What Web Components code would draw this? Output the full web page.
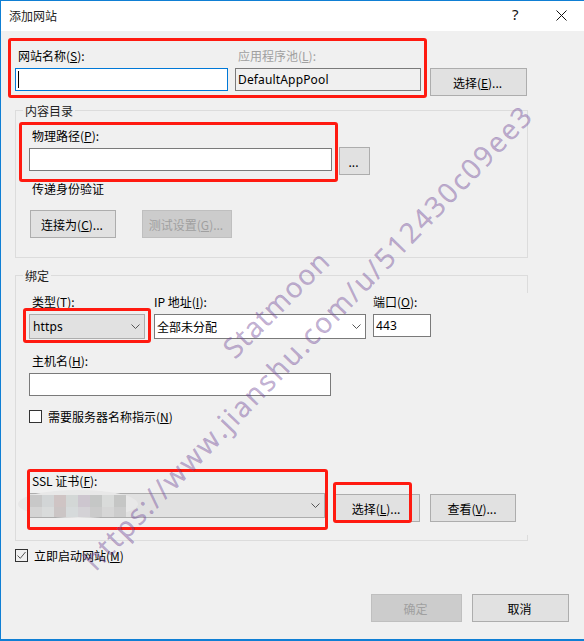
<!DOCTYPE html>
<html>
<head>
<meta charset="utf-8">
<style>
html, body { margin: 0; height: 100%; background: #f0f0f0; }
body { font: 12px "Noto Sans CJK SC", "Noto Sans", sans-serif; color: #000; overflow: hidden; }
u { text-underline-offset: 1px; }
</style>
</head>
<body>
<win-dialog heading="添加网站">
  <win-row top="15" left="14" gap="7">
    <win-field width="213"><span slot="label" style="padding-left:3px">网站名称(<u>S</u>):</span><win-input focused></win-input></win-field>
    <win-field width="186"><span slot="label" style="padding-left:3px;color:#a0a0a0">应用程序池(<u>L</u>):</span><win-input readonly value="DefaultAppPool"></win-input></win-field>
    <win-button width="97" style="margin:22px 0 0 2px">选择(<u>E</u>)...</win-button>
  </win-row>
  <win-group legend="内容目录" height="148" style="margin-top:14px">
    <win-row top="15" left="13" gap="7">
      <win-field width="303"><span slot="label" style="padding-left:3px">物理路径(<u>P</u>):</span><win-input></win-input></win-field>
      <win-button width="31" style="margin-top:21px">...</win-button>
    </win-row>
    <win-label style="margin:5px 0 0 16px">传递身份验证</win-label>
    <win-row top="13" left="14" gap="26">
      <win-button width="86">连接为(<u>C</u>)...</win-button>
      <win-button width="90" disabled>测试设置(<u>G</u>)...</win-button>
    </win-row>
  </win-group>
  <win-group legend="绑定" height="266" open-right style="margin-top:17px">
    <win-row top="16" left="13" gap="8">
      <win-field width="116"><span slot="label" style="padding-left:3px">类型(<u>T</u>):</span><win-select flat value="https"></win-select></win-field>
      <win-field width="212" style="margin-left:1px"><span slot="label">IP 地址(<u>I</u>):</span><win-select value="全部未分配"></win-select></win-field>
      <win-field width="58" style="margin-left:-1px"><span slot="label">端口(<u>O</u>):</span><win-input value="443"></win-input></win-field>
    </win-row>
    <win-row top="12" left="13">
      <win-field width="302"><span slot="label" style="padding-left:3px">主机名(<u>H</u>):</span><win-input></win-input></win-field>
    </win-row>
    <win-check style="margin:12px 0 0 13px">需要服务器名称指示(<u>N</u>)</win-check>
    <win-row top="46" left="13" gap="9">
      <win-field width="296"><span slot="label" style="padding-left:3px">SSL 证书(<u>F</u>):</span><win-select flat blurred></win-select></win-field>
      <win-button width="86" style="margin-top:23px">选择(<u>L</u>)...</win-button>
      <win-button width="86" style="margin:23px 0 0 1px">查看(<u>V</u>)...</win-button>
    </win-row>
  </win-group>
  <win-check checked style="margin:6px 0 0 14px">立即启动网站(<u>M</u>)</win-check>
  <win-row slot="footer" gap="10" style="justify-content:flex-end">
    <win-button width="91" disabled>确定</win-button>
    <win-button width="97">取消</win-button>
  </win-row>
  <red-mark slot="overlay" box="8,38,419,60"></red-mark>
  <red-mark slot="overlay" box="19,122,319,60"></red-mark>
  <red-mark slot="overlay" box="23,308,128,35"></red-mark>
  <red-mark slot="overlay" box="27,469,301,61"></red-mark>
  <red-mark slot="overlay" box="333,482,79,41"></red-mark>
  <water-mark slot="overlay"></water-mark>
</win-dialog>

<script>
class WinDialog extends HTMLElement {
  constructor() {
    super();
    this.attachShadow({ mode: 'open' }).innerHTML = `
      <style>
        :host { display: flex; flex-direction: column; position: relative; box-sizing: border-box; width: 584px; height: 641px; border: solid #0f7fd4; border-width: 1px 0 2px 1px; background: #f0f0f0; overflow: hidden; }
        .title { height: 30px; flex: none; background: #fff; display: flex; align-items: center; padding: 0 0 2px 8px; box-sizing: border-box; position: relative; }
        .title span { color: #222; }
        .help { position: absolute; left: 511px; top: 3px; font: 15px "Noto Sans", sans-serif; color: #111; }
        svg { position: absolute; left: 555px; top: 9px; }
        main { flex: 1; }
        footer { flex: none; padding: 0 15px 17px 0; }
      </style>
      <div class="title"><span></span><div class="help">?</div>
        <svg width="11" height="11" viewBox="0 0 11 11"><path d="M.5.5l10 10M10.5.5l-10 10" stroke="#111" fill="none"/></svg>
      </div>
      <main><slot></slot></main>
      <footer><slot name="footer"></slot></footer>
      <slot name="overlay"></slot>`;
  }
  connectedCallback() {
    this.shadowRoot.querySelector('.title span').textContent = this.getAttribute('heading');
  }
}

class WinRow extends HTMLElement {
  constructor() {
    super();
    this.attachShadow({ mode: 'open' }).innerHTML = `
      <style>:host { display: flex; align-items: flex-start; }</style><slot></slot>`;
  }
  connectedCallback() {
    if (this.hasAttribute('top')) this.style.marginTop = this.getAttribute('top') + 'px';
    if (this.hasAttribute('left')) this.style.marginLeft = this.getAttribute('left') + 'px';
    if (this.hasAttribute('gap')) this.style.gap = this.getAttribute('gap') + 'px';
  }
}

class WinField extends HTMLElement {
  constructor() {
    super();
    this.attachShadow({ mode: 'open' }).innerHTML = `
      <style>
        :host { display: flex; flex-direction: column; }
        .label { box-sizing: border-box; height: 22px; padding-top: 1px; line-height: 17px; white-space: nowrap; display: block; }
      </style>
      <div class="label"><slot name="label"></slot></div><slot></slot>`;
  }
  connectedCallback() {
    this.style.width = this.getAttribute('width') + 'px';
  }
}

class WinInput extends HTMLElement {
  constructor() {
    super();
    this.attachShadow({ mode: 'open' }).innerHTML = `
      <style>
        :host { display: block; box-sizing: border-box; height: 23px; border: 1px solid #7a7a7a; background: #fff; padding: 0 2px; line-height: 21px; font-family: "Noto Sans", sans-serif; letter-spacing: .15px; position: relative; white-space: nowrap; }
        :host([focused]) { border-color: #0078d7; }
        :host([readonly]) { background: #f0f0f0; }
        :host([focused])::after { content: ""; position: absolute; left: 2px; top: 2px; height: 17px; width: 1px; background: #000; }
      </style><span></span>`;
  }
  connectedCallback() {
    this.shadowRoot.querySelector('span').textContent = this.getAttribute('value') || '';
  }
}

class WinSelect extends HTMLElement {
  constructor() {
    super();
    this.attachShadow({ mode: 'open' }).innerHTML = `
      <style>
        :host { display: flex; align-items: center; box-sizing: border-box; height: 25px; border: 1px solid #7a7a7a; background: #fff; padding: 0 4px 0 2px; position: relative; white-space: nowrap; }
        :host([flat]) { background: #e1e1e1; border-color: #adadad; padding-left: 3px; font-family: "Noto Sans", sans-serif; letter-spacing: .15px; }
        .arrow { flex: none; margin-left: auto; }
        .smear { position: absolute; left: -12px; top: -4px; width: 120px; height: 28px; display: none; filter: blur(.6px); }
        :host([blurred]) .smear { display: block; }
      </style>
      <span></span>
      <svg class="arrow" width="9" height="5" viewBox="0 0 9 5"><path d="M.5.500L4.500 4.500 8.500.500" stroke="#555" fill="none"/></svg>
      <svg class="smear" viewBox="0 0 120 28">
        <ellipse cx="60" cy="14" rx="60" ry="14" fill="#e8e8e8"/>
        <rect x="12" y="5" width="12" height="12" fill="#c8c8c8"/><rect x="24" y="5" width="12" height="12" fill="#d2d5d6"/>
        <rect x="36" y="5" width="12" height="12" fill="#cfc4c4"/><rect x="48" y="5" width="12" height="12" fill="#d3d7d6"/>
        <rect x="60" y="5" width="12" height="12" fill="#cdc6cf"/><rect x="72" y="5" width="12" height="12" fill="#c5c7c6"/>
        <rect x="84" y="5" width="12" height="12" fill="#d9dbda"/><rect x="96" y="5" width="12" height="12" fill="#c5c6c5"/>
        <rect x="12" y="17" width="12" height="10" fill="#d4d4d4"/><rect x="24" y="17" width="12" height="10" fill="#d9dbdb"/>
        <rect x="36" y="17" width="12" height="10" fill="#cbc5c5"/><rect x="48" y="17" width="12" height="10" fill="#d6dadb"/>
        <rect x="60" y="17" width="12" height="10" fill="#d4d2d6"/><rect x="72" y="17" width="12" height="10" fill="#cbcbcb"/>
        <rect x="84" y="17" width="12" height="10" fill="#d6d6d6"/><rect x="96" y="17" width="12" height="10" fill="#cccccc"/>
      </svg>`;
  }
  connectedCallback() {
    this.shadowRoot.querySelector('span').textContent = this.getAttribute('value') || '';
  }
}

class WinButton extends HTMLElement {
  constructor() {
    super();
    this.attachShadow({ mode: 'open' }).innerHTML = `
      <style>
        :host { display: flex; align-items: center; justify-content: center; box-sizing: border-box; flex: none; height: 28px; padding-right: 2px; background: #e1e1e1; border: 1px solid #adadad; white-space: nowrap; }
        :host([disabled]) { background: #cccccc; border-color: #bfbfbf; color: #a0a0a0; }
      </style><slot></slot>`;
  }
  connectedCallback() {
    this.style.width = this.getAttribute('width') + 'px';
  }
}

class WinLabel extends HTMLElement {
  constructor() {
    super();
    this.attachShadow({ mode: 'open' }).innerHTML = `
      <style>:host { display: block; line-height: 17px; }</style><slot></slot>`;
  }
}

class WinCheck extends HTMLElement {
  constructor() {
    super();
    this.attachShadow({ mode: 'open' }).innerHTML = `
      <style>
        :host { display: flex; align-items: center; gap: 6px; line-height: 17px; white-space: nowrap; }
        .box { box-sizing: border-box; width: 13px; height: 13px; border: 1px solid #333; background: #fff; flex: none; }
        :host([checked]) .box { background: transparent; }
        svg { display: none; }
        :host([checked]) svg { display: block; }
      </style>
      <div class="box"><svg width="11" height="11" viewBox="0 0 11 11"><path d="M1.500 5.500l2.800 2.800 5.200-6.300" stroke="#555" fill="none"/></svg></div><span><slot></slot></span>`;
  }
}

class WinGroup extends HTMLElement {
  constructor() {
    super();
    this.attachShadow({ mode: 'open' }).innerHTML = `
      <style>
        :host { display: block; box-sizing: border-box; position: relative; margin-left: 14px; width: 513px; border: 1px solid #dcdcdc; }
        .legend { position: absolute; left: 7px; top: -7px; padding: 0 2px; background: #f0f0f0; line-height: 14px; color: #222; }
        .cut { display: none; position: absolute; right: -1px; top: 17px; width: 1px; height: 242px; background: #f0f0f0; }
        :host([open-right]) .cut { display: block; }
      </style>
      <div class="legend"></div><div class="cut"></div><slot></slot>`;
  }
  connectedCallback() {
    this.shadowRoot.querySelector('.legend').textContent = this.getAttribute('legend');
    this.style.height = this.getAttribute('height') + 'px';
  }
}

// annotation drawn over the screenshot, placed by x,y,w,h
class RedMark extends HTMLElement {
  constructor() {
    super();
    this.attachShadow({ mode: 'open' }).innerHTML = `
      <style>:host { position: absolute; box-sizing: border-box; border: 3px solid #ff1a10; border-radius: 3px; pointer-events: none; }</style>`;
  }
  connectedCallback() {
    const [x, y, w, h] = this.getAttribute('box').split(',').map(Number);
    Object.assign(this.style, { left: x - 1 + 'px', top: y - 1 + 'px', width: w + 'px', height: h + 'px' });
  }
}

class WaterMark extends HTMLElement {
  constructor() {
    super();
    this.attachShadow({ mode: 'open' }).innerHTML = `
      <style>
        :host { position: absolute; inset: 0; pointer-events: none; font: 28px "Open Sans", sans-serif; color: rgba(110, 70, 150, .42); -webkit-text-stroke: .3px rgba(110, 70, 150, .42); }
        div { position: absolute; white-space: nowrap; transform-origin: 0 100%; transform: rotate(-46deg); line-height: 1; }
        .a { left: 97px; top: 545px; letter-spacing: 2.1px; }
        .b { left: 236px; top: 333px; letter-spacing: 1.2px; transform: rotate(-45deg); }
      </style>
      <div class="a">https://www.jianshu.com/u/512430c09ee3</div>
      <div class="b">Statmoon</div>`;
  }
}

customElements.define('win-dialog', WinDialog);
customElements.define('win-row', WinRow);
customElements.define('win-field', WinField);
customElements.define('win-input', WinInput);
customElements.define('win-select', WinSelect);
customElements.define('win-button', WinButton);
customElements.define('win-label', WinLabel);
customElements.define('win-check', WinCheck);
customElements.define('win-group', WinGroup);
customElements.define('red-mark', RedMark);
customElements.define('water-mark', WaterMark);
</script>
</body>
</html>
